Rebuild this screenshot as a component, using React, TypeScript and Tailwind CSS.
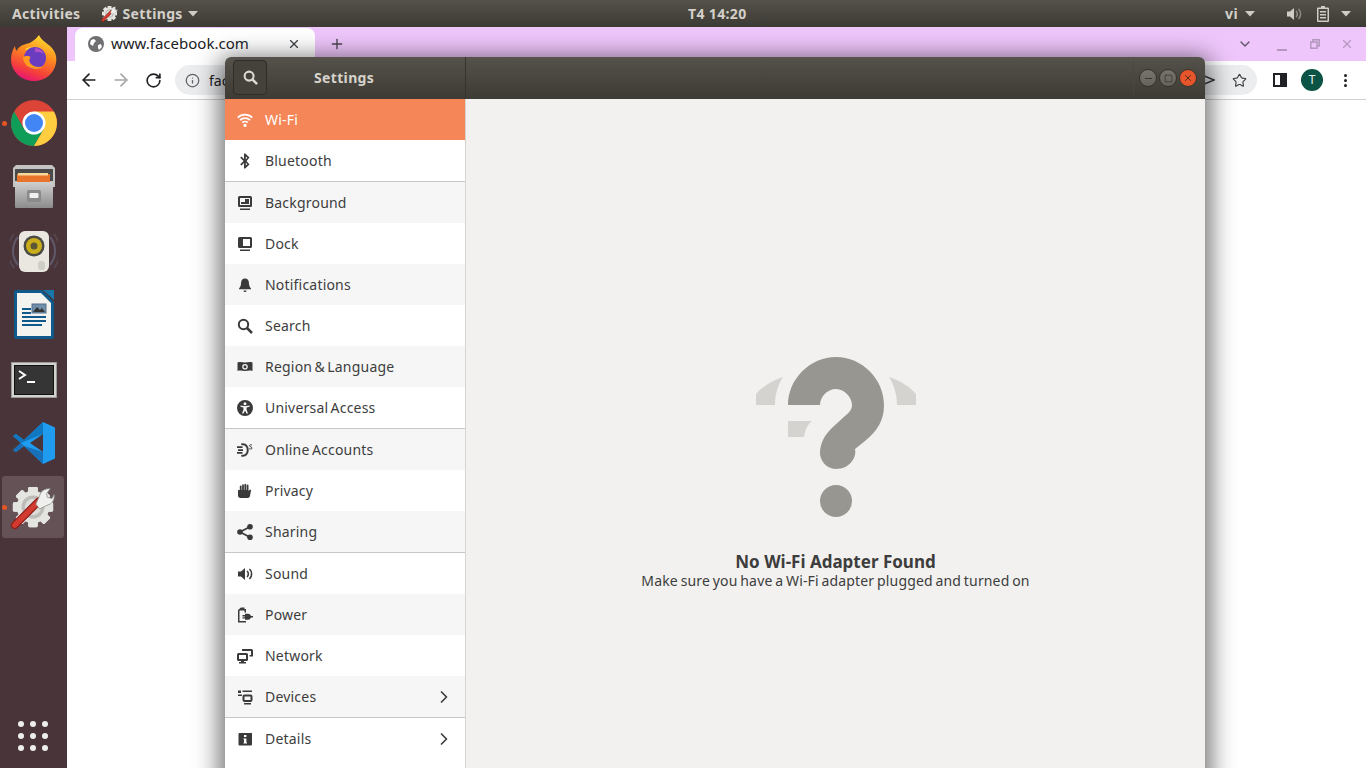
import React from "react";
import { ArrowLeft, ArrowRight, RotateCw, Star, Info, Plus, X, ChevronDown, ChevronRight, Minus, Square } from "lucide-react";

const Caret = ({ className = "" }: { className?: string }) => (
  <svg width="10" height="6" viewBox="0 0 10 6" className={className}>
    <path d="M0 0h10L5 5.500z" fill="#cfccc5" />
  </svg>
);

// sidebar icons, all on a 16 box
const I = ({ children }: { children: React.ReactNode }) => (
  <svg width="16" height="16" viewBox="0 0 16 16" fill="#3a3a3a" className="shrink-0">
    {children}
  </svg>
);

const icons: Record<string, React.ReactNode> = {
  wifi: (
    <svg width="16" height="16" viewBox="0 0 16 16" fill="none" stroke="#fff" strokeWidth="1.800" className="shrink-0">
      <path d="M.8 5.600a10.200 10.200 0 0 1 14.400 0M3 8.200a7.200 7.200 0 0 1 10 0M5.300 10.700a3.900 3.900 0 0 1 5.400 0" />
      <circle cx="8" cy="13.400" r="1.600" fill="#fff" stroke="none" />
    </svg>
  ),
  bluetooth: (
    <I>
      <path d="M7 .5h1.200l4.300 4-3 3.500 3 3.500-4.300 4H7V10l-2.600 2.600-1.200-1.300L6.600 8 3.200 4.700l1.200-1.300L7 6zM8.800 3.400v3l1.500-1.600zm0 6.200v3l1.500-1.400z" />
    </I>
  ),
  background: (
    <I>
      <path fillRule="evenodd" d="M2.500 1h11A1.500 1.500 0 0 1 15 2.500v8a1.500 1.500 0 0 1-1.500 1.500h-11A1.500 1.500 0 0 1 1 10.500v-8A1.500 1.500 0 0 1 2.500 1zM3 3v7h10V3zM3 13.500h10V15H3z" />
      <path d="M8 4h4v5H4V7h4z" />
    </I>
  ),
  dock: (
    <I>
      <path fillRule="evenodd" d="M2.500 1h11A1.500 1.500 0 0 1 15 2.500v8a1.500 1.500 0 0 1-1.500 1.500h-11A1.500 1.500 0 0 1 1 10.500v-8A1.500 1.500 0 0 1 2.500 1zM6 3v7h7V3zM3 13.500h10V15H3z" />
    </I>
  ),
  notifications: (
    <I>
      <path d="M8 1.500c2.600 0 3.800 1.900 3.900 4.200.1 2.500.6 4.300 2.100 5.800v.8H2v-.8c1.500-1.500 2-3.300 2.100-5.800C4.200 3.400 5.400 1.500 8 1.500zM6.500 13.500h3a1.500 1.500 0 0 1-3 0z" />
    </I>
  ),
  search: (
    <svg width="16" height="16" viewBox="0 0 16 16" fill="none" stroke="#3a3a3a" strokeWidth="2" className="shrink-0">
      <circle cx="6.500" cy="6.500" r="4.700" />
      <path d="M10 10l5 5" strokeWidth="2.500" />
    </svg>
  ),
  region: (
    <I>
      <path fillRule="evenodd" d="M.5 3.500c3-1.200 5 0 7.500 0s4.500-1.200 7.500 0v8.500c-3-1.200-5 0-7.500 0s-4.500-1.200-7.500 0zM8 5a2.800 2.800 0 1 0 0 5.600A2.800 2.800 0 0 0 8 5zm0 1.300a1.500 1.500 0 1 1 0 3 1.500 1.500 0 0 1 0-3z" />
    </I>
  ),
  universal: (
    <I>
      <path fillRule="evenodd" d="M8 0a8 8 0 1 1 0 16A8 8 0 0 1 8 0zm0 2.200a1.500 1.500 0 1 0 0 3 1.500 1.500 0 0 0 0-3zM3.500 5.500v1.300l3 .8v2l-1.500 4h1.400L8 10.500l1.600 3.100H11l-1.500-4v-2l3-.8V5.500L8 6.300z" />
    </I>
  ),
  online: (
    <I>
      <path d="M4.500 1.500H6c3.300 0 5.500 2.800 5.500 6.500S9.300 14.500 6 14.500H4.500V13H6c2.400 0 4-2.200 4-5S8.400 3 6 3H4.500z" strokeWidth=".4" stroke="#3a3a3a" />
      <path d="M0 4.300h5.500V6H0zM1 7.200h5v1.700H1zM0 10.100h5.500v1.700H0z" />
      <path d="M15 3.200c-1-.8-2.500-.6-2.500.5 0 1.300 2.500 1 2.500 2.400 0 1.100-1.600 1.200-2.700.5" fill="none" stroke="#3a3a3a" strokeWidth="1" />
    </I>
  ),
  privacy: (
    <I>
      <path d="M1 7h1.800V3.500a.9.900 0 0 1 1.800 0V7h.5V2.200a.9.900 0 0 1 1.800 0V7h.5V1.700a.9.900 0 0 1 1.800 0V7h.5V2.500a.9.900 0 0 1 1.800 0V8l1.600-1.500 1 .5L13 13c-.5 1.500-1.500 2-2.500 2H3.500C2 15 1 14 1 12.500z" />
    </I>
  ),
  sharing: (
    <I>
      <circle cx="3" cy="8" r="2.800" />
      <circle cx="13" cy="2.800" r="2.800" />
      <circle cx="13" cy="13.200" r="2.800" />
      <path d="M3 8l10-5.200M3 8l10 5.200" stroke="#3a3a3a" strokeWidth="1.700" />
    </I>
  ),
  sound: (
    <I>
      <path d="M1 5.500h3L8 2v12l-4-3.500H1z" />
      <path d="M10 5a4 4 0 0 1 0 6M12.500 3a7 7 0 0 1 0 10" fill="none" stroke="#3a3a3a" strokeWidth="1.600" />
    </I>
  ),
  power: (
    <I>
      <path d="M4 .5h3.500V2H9v3.500H7.500V3.500h-5v10.500H9v1.500H1V3l3-2.500z" />
      <path d="M8 6.800h3a3.200 3.200 0 0 1 3 2.200H16v1.600h-2a3.200 3.200 0 0 1-3 2.200H8v-1.300H5.500v-1.300H8V9.400H5.500V8.100H8z" />
    </I>
  ),
  network: (
    <I>
      <path fillRule="evenodd" d="M1.500 5h8A1.500 1.500 0 0 1 11 6.500v5A1.500 1.500 0 0 1 9.500 13H7v1h2v1.500H2V14h2v-1H1.500A1.500 1.500 0 0 1 0 11.500v-5A1.500 1.500 0 0 1 1.500 5zM2 7v4h7V7z" />
      <path d="M5 1h9.500A1.500 1.500 0 0 1 16 2.500v6h-3.500V7H14V3H5z" />
    </I>
  ),
  devices: (
    <I>
      <path d="M1 1.500h3V4H1zM5.500 1.500H15V3H5.500zM1 5.500h4V7H1z" />
      <path fillRule="evenodd" d="M7.500 5.500h6A2 2 0 0 1 15.500 7.500v3.500a2 2 0 0 1-2 2h-6a2 2 0 0 1-2-2V7.500a2 2 0 0 1 2-2zM7.500 7.500V11h6V7.500zM7 14h7v1.500H7z" />
    </I>
  ),
  details: (
    <I>
      <path fillRule="evenodd" d="M2.500 2h11A1 1 0 0 1 15 3v10.500a1 1 0 0 1-1 1H2.500a1 1 0 0 1-1-1V3a1 1 0 0 1 1-1zM7 4v2h2.400V4zm-.500 3.500v1H7v3h-.500v1H10v-1h-.600v-4z" />
    </I>
  ),
};

type Row = { key: string; label: string; more?: boolean; sep?: boolean; grey?: boolean; active?: boolean };

const rows: Row[] = [
  { key: "wifi", label: "Wi-Fi", active: true },
  { key: "bluetooth", label: "Bluetooth", sep: true },
  { key: "background", label: "Background", grey: true },
  { key: "dock", label: "Dock" },
  { key: "notifications", label: "Notifications", grey: true },
  { key: "search", label: "Search" },
  { key: "region", label: "Region & Language", grey: true },
  { key: "universal", label: "Universal Access", sep: true },
  { key: "online", label: "Online Accounts", grey: true },
  { key: "privacy", label: "Privacy" },
  { key: "sharing", label: "Sharing", grey: true, sep: true },
  { key: "sound", label: "Sound" },
  { key: "power", label: "Power", grey: true },
  { key: "network", label: "Network" },
  { key: "devices", label: "Devices", grey: true, more: true, sep: true },
  { key: "details", label: "Details", more: true },
];

const SettingsGlyph = () => (
  <svg width="100%" height="100%" viewBox="0 0 48 48">
    <g fill="#e4e4e1">
      {[0, 45, 90, 135, 180, 225, 270, 315].map((a) => (
        <rect key={a} x="19" y="3" width="10" height="42" rx="1.500" transform={`rotate(${a} 24 24)`} />
      ))}
      <circle cx="24" cy="24" r="17" />
    </g>
    <circle cx="24" cy="24" r="12" fill="#bdbcb8" />
    <circle cx="24" cy="24" r="8.500" fill="#dcdcd8" />
    <path d="M5 43L30 18" stroke="#8f1f1a" strokeWidth="8" strokeLinecap="round" />
    <path d="M5 43L30 18" stroke="#d33b30" strokeWidth="5.500" strokeLinecap="round" />
    <path d="M27 21l4-9c1-4 6-8 11-7l-4 5 1 4 5 1 2-4c1 5-2 10-7 11l-8 4z" fill="#f0f0ee" stroke="#8d8d89" strokeWidth=".8" />
  </svg>
);

const Dock = () => (
  <div className="w-[67px] shrink-0 h-full bg-[#49343a] relative flex flex-col items-center">
    {/* firefox */}
    <svg width="46" height="48" viewBox="0 0 46 48" className="mt-[7px] shrink-0">
      <defs>
        <linearGradient id="ff" x1="0.7" y1="0" x2="0.3" y2="1">
          <stop offset="0" stopColor="#ffdf30" />
          <stop offset="0.4" stopColor="#ff8a1f" />
          <stop offset="0.75" stopColor="#f5413a" />
          <stop offset="1" stopColor="#e6107a" />
        </linearGradient>
      </defs>
      <path d="M28 1c2 5 8 8 12 12 5 5 6 11 5 16-2 11-11 18-22 18C10 47 0 37 0 25c0-5 2-10 4-13 0 2 1 4 2 5 1-4 5-6 9-7 5-1 9-4 13-9z" fill="url(#ff)" />
      <path d="M14 15c5-3 12-3 17 0-5 0-9 1-12 3z" fill="#ffcf3a" />
      <circle cx="24" cy="24" r="11" fill="#6a3cc0" />
      <path d="M24 14a10 10 0 0 1 9 6c-3-2-6-2-9-2z" fill="#b04fc8" />
      <path d="M12 23c0 7 6 12 13 12 3 0 6-1 8-3-5 2-10 1-13-2-2-2-2-4-1-6 1-1 0-2-2-2-2 0-4 0-5 1z" fill="#ff9a1f" />
    </svg>
    {/* chrome */}
    <svg width="46" height="46" viewBox="0 0 46 46" className="mt-[18px] shrink-0">
      <circle cx="23" cy="23" r="23" fill="#db4437" />
      <path d="M3.100 11.500L13 28.750H33L23 46A23 23 0 0 1 3.100 11.500z" fill="#0f9d58" />
      <path d="M42.900 11.500H23V23L33 28.750 23 46A23 23 0 0 0 42.900 11.500z" fill="#ffcd40" />
      <circle cx="23" cy="23" r="11.500" fill="#fff" />
      <circle cx="23" cy="23" r="9" fill="#4285f4" />
    </svg>
    {/* files */}
    <svg width="42" height="44" viewBox="0 0 42 44" className="mt-[19px] shrink-0">
      <defs>
        <linearGradient id="dr" x1="0" y1="0" x2="0" y2="1">
          <stop offset="0" stopColor="#cfcfcf" />
          <stop offset="1" stopColor="#8c8c8c" />
        </linearGradient>
      </defs>
      <path d="M3 0h36l3 3v19H0V3z" fill="#c4c4c4" />
      <rect x="2" y="4" width="38" height="12" fill="#4a4a4a" />
      <rect x="4" y="9" width="33" height="10" fill="#e8742c" />
      <rect x="5" y="8" width="30" height="2.500" fill="#f7d79a" />
      <rect x="2" y="17" width="38" height="26" rx="1" fill="url(#dr)" />
      <rect x="14" y="25" width="14" height="12" rx="2" fill="#8a8a8a" />
      <rect x="16.500" y="28" width="9" height="5" rx="1" fill="#f0f0f0" />
    </svg>
    {/* speaker */}
    <svg width="48" height="44" viewBox="0 0 48 44" className="mt-[21px] shrink-0">
      <path d="M8 7a22 22 0 0 0 0 28M40 7a22 22 0 0 1 0 28" fill="none" stroke="#6c7289" strokeWidth="2" opacity=".6" />
      <path d="M4 4a28 28 0 0 0 0 34M44 4a28 28 0 0 1 0 34" fill="none" stroke="#6c7289" strokeWidth="1.500" opacity=".35" />
      <rect x="9" y="1" width="30" height="41" rx="6" fill="#e9e7e0" />
      <circle cx="24" cy="16" r="10.500" fill="#4a4a44" />
      <circle cx="24" cy="16" r="8" fill="#c9ad1a" />
      <circle cx="24" cy="16" r="3.500" fill="#5b5636" />
      <rect x="28" y="31" width="7" height="9" rx="3" fill="#cfcdc6" />
    </svg>
    {/* writer */}
    <svg width="40" height="49" viewBox="0 0 40 49" className="mt-[16px] shrink-0">
      <path d="M2 0h26l12 12v35a2 2 0 0 1-2 2H2a2 2 0 0 1-2-2V2a2 2 0 0 1 2-2z" fill="#0f5a8a" />
      <path d="M3 3h24l10 10v33H3z" fill="#f3f3f0" />
      <path d="M29 0h11v10z" fill="#1976a8" />
      <rect x="18" y="14" width="14" height="9" fill="#6f8faa" stroke="#54708a" />
      <path d="M19 22l4-5 3 3 2-2 3 4z" fill="#333" />
      <path d="M8 18h9v2H8zM8 22h9v2H8zM8 26h24v2H8zM8 30h24v2H8zM8 34h20v2H8z" fill="#0f5a8a" />
    </svg>
    {/* terminal */}
    <svg width="46" height="36" viewBox="0 0 46 36" className="mt-[23px] shrink-0">
      <rect x="0" y="0" width="46" height="36" fill="#d2d2cf" />
      <rect x=".5" y=".5" width="45" height="35" fill="none" stroke="#9a9a96" />
      <rect x="3" y="3" width="40" height="30" fill="#111" />
      <rect x="4" y="4" width="38" height="28" fill="#353535" />
      <path d="M8 9l6 4-6 4" fill="none" stroke="#fff" strokeWidth="2" />
      <path d="M16 20h8" stroke="#fff" strokeWidth="2" />
    </svg>
    {/* vscode */}
    <svg width="42" height="42" viewBox="0 0 42 42" className="mt-[24px] shrink-0">
      <path d="M30 0l12 5.500v31L30 42 11 24 3 30l-3-2 8-7-8-7 3-2 8 6z" fill="#1f9cf0" />
      <path d="M30 0L11 18 3 12l-3 2 8 7L30 12z" fill="#0e72b8" opacity=".85" />
      <path d="M30 12v18L17 21z" fill="#49343a" />
      <path d="M30 42V30L11 24 3 30l-3-2 8-7 22 21z" fill="#1770b8" />
    </svg>
    {/* settings, running */}
    <div className="absolute left-[2px] top-[449px] w-[62px] h-[62px] rounded-[3px] bg-white/15 p-[8px]">
      <SettingsGlyph />
    </div>
    <span className="absolute left-[2px] top-[94px] w-[5px] h-[5px] rounded-full bg-[#e95420]" />
    <span className="absolute left-[2px] top-[478px] w-[5px] h-[5px] rounded-full bg-[#e95420]" />
    <div className="absolute left-[18px] top-[694px] grid grid-cols-3 gap-[6px]">
      {Array.from({ length: 9 }).map((_, i) => (
        <span key={i} className="w-[6px] h-[6px] rounded-full bg-[#eeeeec]" />
      ))}
    </div>
  </div>
);

const Browser = () => (
  <div className="flex-1 h-full flex flex-col bg-white">
    <div className="h-[34px] shrink-0 bg-[#eec6fb] flex items-end pl-[8px]">
      <div className="w-[240px] h-[33px] bg-white rounded-t-[8px] flex items-center pl-[13px] pr-[14px] pb-[2px] text-[#202124] text-[15px]">
        <svg width="16" height="16" viewBox="0 0 16 16" className="shrink-0">
          <circle cx="8" cy="8" r="8" fill="#6f6f72" />
          <path d="M3 4l3-1 2 2-2 2-1 3-3-2zM10 9l3-1 1 3-3 3-1-2z" fill="#fff" />
        </svg>
        <span className="ml-[7px] flex-1">www.facebook.com</span>
        <X size={14} strokeWidth={2} color="#3c4043" />
      </div>
      <Plus size={16} strokeWidth={2} color="#4a4650" className="ml-[14px] mb-[9px]" />
      <div className="flex-1" />
      <ChevronDown size={16} strokeWidth={2} color="#5f5466" className="mb-[9px] mr-[24px]" />
      <svg width="10" height="2" viewBox="0 0 10 2" className="mb-[10px] mr-[23px]">
        <rect width="10" height="2" fill="#b397bd" />
      </svg>
      <svg width="10" height="10" viewBox="0 0 10 10" className="mb-[12px] mr-[20px]" fill="none" stroke="#b397bd" strokeWidth="1.500">
        <path d="M3 3V.8h6.200V7H7" />
        <rect x=".8" y="3" width="6.200" height="6.200" />
      </svg>
      <X size={14} strokeWidth={2} color="#b397bd" className="mb-[10px] mr-[12px]" />
    </div>
    <div className="h-[39px] shrink-0 border-b border-[#d0d0d0] flex items-center pl-[12px]">
      <ArrowLeft size={20} strokeWidth={2} color="#202124" />
      <ArrowRight size={20} strokeWidth={2} color="#a5a5a8" className="ml-[12px]" />
      <RotateCw size={17} strokeWidth={2.300} color="#202124" className="ml-[14px]" />
      <div className="ml-[13px] w-[1082px] h-[30px] rounded-full bg-[#ecedef] flex items-center pl-[10px] pr-[10px] text-[14px] text-[#202124]">
        <Info size={15} strokeWidth={2} color="#5f6368" />
        <span className="ml-[9px] flex-1">facebook.com</span>
        <svg width="12" height="12" viewBox="0 0 12 12" fill="none" stroke="#3c4043" strokeWidth="1.500" className="mr-[17px]">
          <path d="M0 1.500L11 6 0 10.500" />
        </svg>
        <Star size={15} strokeWidth={1.800} color="#3c4043" />
      </div>
      <div className="ml-[16px] w-[14px] h-[14px] border-[2px] border-[#202124] bg-white flex justify-end">
        <span className="w-[5px] bg-[#202124]" />
      </div>
      <div className="ml-[14px] w-[22px] h-[22px] rounded-full bg-[#0b5345] text-[#e8f0ee] text-[12px] flex items-center justify-center">T</div>
      <div className="ml-[21px] flex flex-col gap-[2px]">
        <span className="w-[3px] h-[3px] rounded-full bg-[#202124]" />
        <span className="w-[3px] h-[3px] rounded-full bg-[#202124]" />
        <span className="w-[3px] h-[3px] rounded-full bg-[#202124]" />
      </div>
    </div>
    <div className="flex-1" />
  </div>
);

const WinBtn = ({ children, close }: { children: React.ReactNode; close?: boolean }) => (
  <div
    className={
      close
        ? "w-[18px] h-[18px] rounded-full bg-[#e6562a] border border-[#34322d] flex items-center justify-center"
        : "w-[18px] h-[18px] rounded-full bg-gradient-to-b from-[#76746d] to-[#65635c] border border-[#34322d] flex items-center justify-center"
    }
  >
    {children}
  </div>
);

const SettingsWindow = () => (
  <div className="absolute left-[225px] top-[57px] w-[980px] h-[730px] rounded-t-[6px] shadow-[0_6px_24px_6px_rgba(0,0,0,0.55)] flex flex-col overflow-hidden">
    <div className="h-[42px] shrink-0 flex bg-gradient-to-b from-[#55524b] to-[#3e3b35]">
      <div className="w-[241px] shrink-0 border-r border-[#36342f] flex items-center pl-[8px] pb-[1px]">
        <div className="w-[34px] h-[35px] rounded-[4px] border border-[#2f2d29] bg-[#45423c] flex items-center justify-center">
          <svg width="15" height="15" viewBox="0 0 16 16" fill="none" stroke="#dcd9d2" strokeWidth="2.200">
            <circle cx="6.500" cy="6.500" r="4.800" />
            <path d="M10 10l5 5" strokeWidth="2.800" />
          </svg>
        </div>
        <span className="ml-[47px] text-[14px] font-bold text-[#d6d3cc] tracking-[0.35px]">Settings</span>
      </div>
      <div className="flex-1 flex items-center justify-end pr-[8px]">
        <div className="w-px h-[34px] bg-[#4a4741] mr-[5px]" />
        <div className="flex gap-[2px]">
          <WinBtn><Minus size={11} strokeWidth={1.800} color="#2f2d29" /></WinBtn>
          <WinBtn><Square size={9} strokeWidth={1.800} color="#2f2d29" /></WinBtn>
          <WinBtn close><X size={10} strokeWidth={2} color="#3a2a20" /></WinBtn>
        </div>
      </div>
    </div>
    <div className="flex-1 flex min-h-0">
      <div className="w-[241px] shrink-0 bg-white border-r border-[#d8d5d0]">
        {rows.map((r) => (
          <div
            key={r.key}
            className={
              (r.active
                ? "bg-[#f58658] text-white "
                : r.grey
                ? "bg-[#f6f6f6] text-[#3d3d3d] "
                : "bg-white text-[#3d3d3d] ") +
              (r.sep ? "h-[42px] border-b border-[#c8c7c4] " : "h-[41px] ") +
              "flex items-center pl-[12px] pr-[11px] text-[14px] tracking-[0.2px] [word-spacing:-1.5px]"
            }
          >
            {icons[r.key]}
            <span className="ml-[12px] flex-1">{r.label}</span>
            {r.more && <ChevronRight size={20} strokeWidth={2} color="#3a3a3a" />}
          </div>
        ))}
      </div>
      <div className="flex-1 bg-[#f2f1ef] flex flex-col items-center pt-[258px]">
        <svg width="160" height="160" viewBox="0 0 160 160" className="shrink-0">
          <path d="M0 48v-11c6-7 15-13 27-17-5 8-8 17-8 28zM160 48v-11c-6-7-15-13-27-17 5 8 8 17 8 28zM32 64h24c-4 3-7 9-8 16H32z" fill="#d4d3cf" />
          <path d="M32 48C32 22 54 0 80 0s48 22 48 48c0 16-7 26-19 36l-10 8c2 9-6 20-19 20-11 0-16-10-16-16 0-11 6-20 14-27l11-10c5-4 7-7 7-11 0-7-7-16-16-16s-16 8-16 16z" fill="#989690" />
          <circle cx="80" cy="144" r="16" fill="#989690" />
        </svg>
        <div className="mt-[35px] text-[17px] leading-[20px] font-bold text-[#3d3d3d]">No Wi-Fi Adapter Found</div>
        <div className="text-[14px] leading-[18px] text-[#3d3d3d] tracking-[0.15px] [word-spacing:-1px]">Make sure you have a Wi-Fi adapter plugged and turned on</div>
      </div>
    </div>
  </div>
);

export default function App() {
  return (
    <div className="relative w-[1366px] h-[768px] overflow-hidden flex flex-col font-['Noto_Sans',sans-serif]">
      <div className="h-[27px] shrink-0 bg-gradient-to-b from-[#55524b] to-[#3c3a34] flex items-center text-[14px] font-bold text-[#d3d0c9] tracking-[0.35px] pl-[12px] pr-[15px]">
        <span>Activities</span>
        <div className="w-[17px] h-[17px] ml-[20px]"><SettingsGlyph /></div>
        <span className="ml-[5px]">Settings</span>
        <Caret className="ml-[5px]" />
        <span className="absolute left-[688px]">T4 14:20</span>
        <div className="flex-1" />
        <span>vi</span>
        <Caret className="ml-[7px]" />
        <svg width="16" height="16" viewBox="0 0 16 16" className="ml-[31px]" fill="#cfccc5">
          <path d="M1 5.500h3L8 2v12l-4-3.500H1z" />
          <path d="M10 5a4 4 0 0 1 0 6M12.500 3a7 7 0 0 1 0 10" fill="none" stroke="#8f8c85" strokeWidth="1.500" />
        </svg>
        <svg width="12" height="16" viewBox="0 0 12 16" className="ml-[15px]">
          <path fillRule="evenodd" d="M4 0h4v1.500h3a1 1 0 0 1 1 1V15a1 1 0 0 1-1 1H1a1 1 0 0 1-1-1V2.500a1 1 0 0 1 1-1h3zM1.500 3v11.500h9V3z" fill="#cfccc5" />
          <path d="M3 5h6v1.500H3zM3 8h6v1.500H3zM3 11h6v1.500H3z" fill="#cfccc5" />
        </svg>
        <Caret className="ml-[12px]" />
      </div>
      <div className="flex-1 flex min-h-0">
        <Dock />
        <Browser />
      </div>
      <SettingsWindow />
    </div>
  );
}
